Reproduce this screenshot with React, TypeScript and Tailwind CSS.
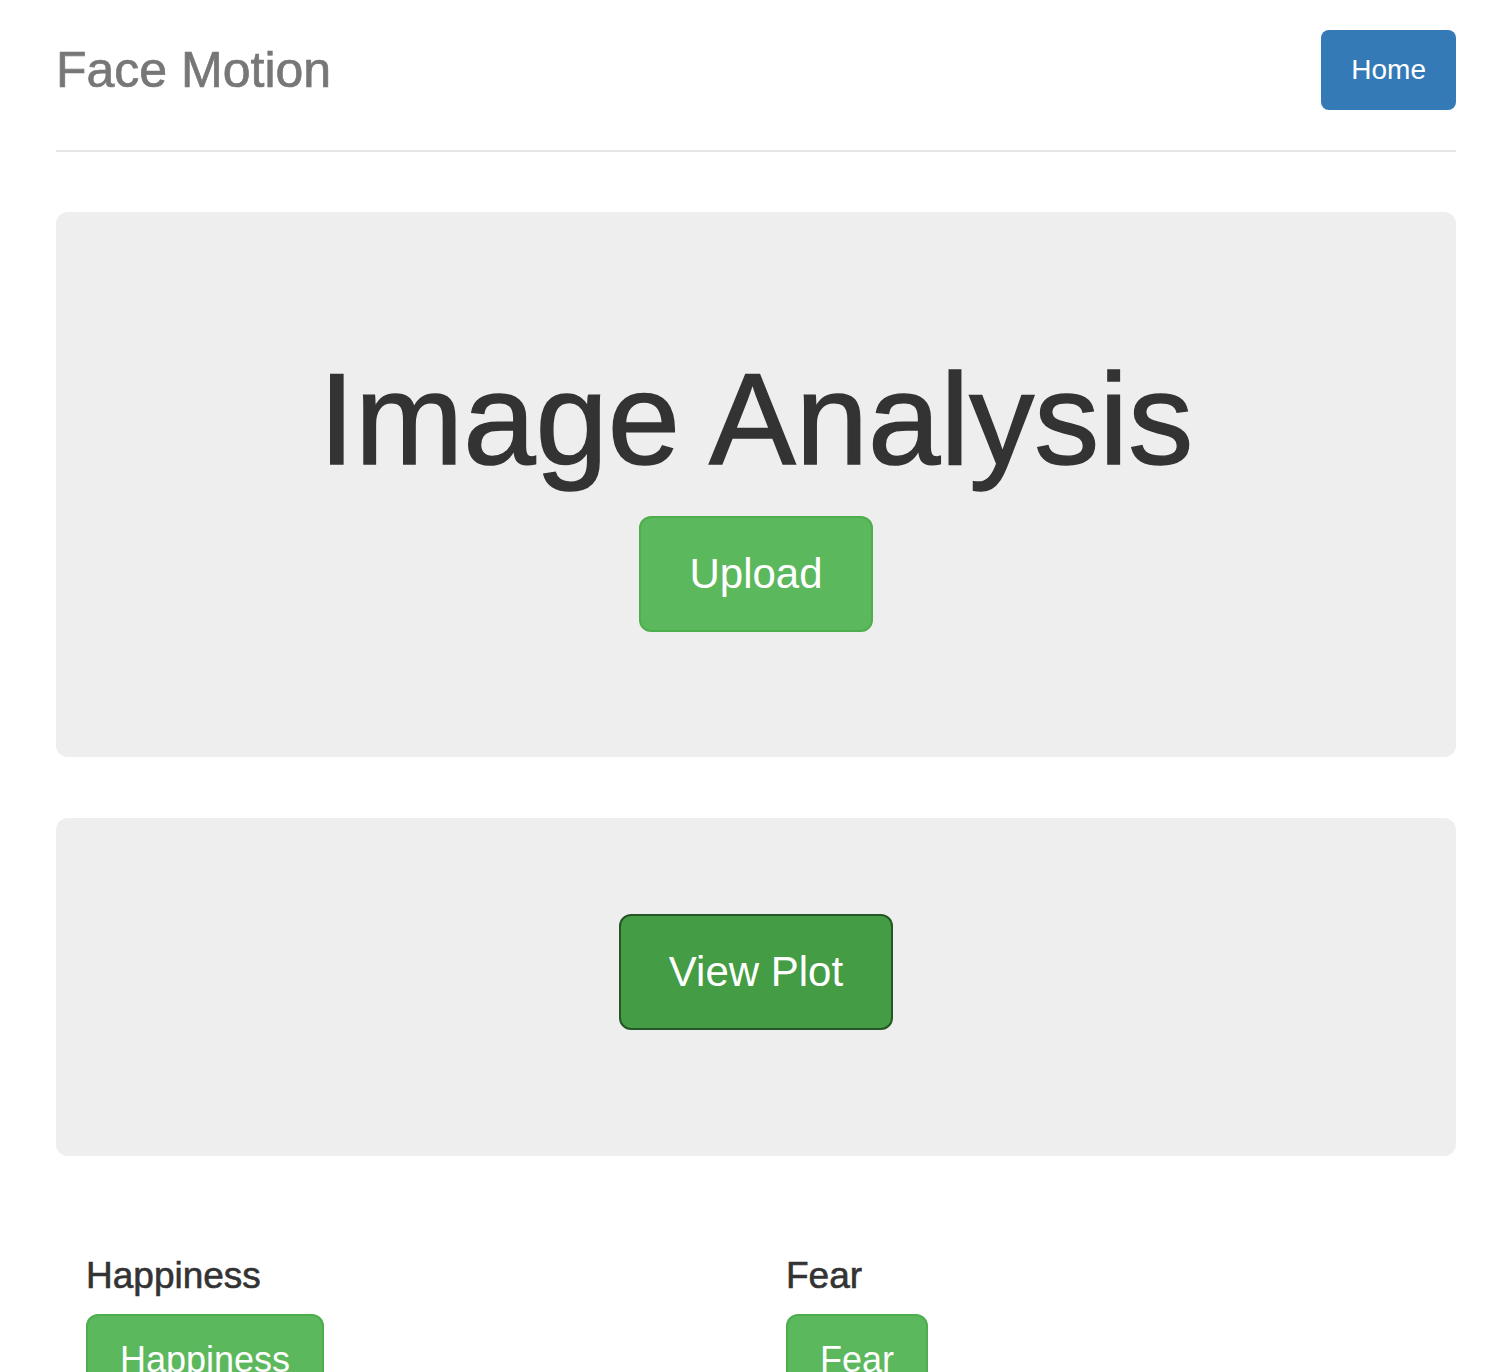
export default function App() {
  return (
    <div className="min-h-screen bg-white font-['Liberation_Sans',Arial,sans-serif] text-[#333]">
      <div className="ml-[56px] w-[1400px]">
        <header className="flex items-center justify-between border-b-2 border-[#e5e5e5] pt-[30px] pb-[40px]">
          <h3 className="text-[50px] leading-[80px] font-medium text-[#777] [-webkit-text-stroke:0.7px_#777]">
            Face Motion
          </h3>
          <a
            href="#"
            className="rounded-[8px] bg-[#337ab7] px-[30px] py-[20px] text-[28px] leading-[40px] text-white"
          >
            Home
          </a>
        </header>

        <section className="mt-[60px] rounded-[12px] bg-[#eee] pt-[136px] pb-[125px] text-center">
          <h1 className="text-[130px] leading-[142px] font-medium text-[#333] [-webkit-text-stroke:1.5px_#333]">
            Image Analysis
          </h1>
          <button className="mt-[26px] rounded-[12px] border-2 border-[#4cae4c] bg-[#5cb85c] px-[48px] py-[28px] text-[42px] leading-[56px] text-white">
            Upload
          </button>
        </section>

        <section className="mt-[61px] rounded-[12px] bg-[#eee] pt-[96px] pb-[126px] text-center">
          <button className="rounded-[12px] border-2 border-[#255625] bg-[#449d44] px-[48px] py-[28px] text-[42px] leading-[56px] text-white">
            View Plot
          </button>
        </section>

        <div className="mt-[100px] grid grid-cols-2">
          {["Happiness", "Fear"].map((name) => (
            <div key={name} className="px-[30px]">
              <h4 className="mb-[18px] text-[37px] leading-[40px] font-medium text-[#333] [-webkit-text-stroke:0.6px_#333]">
                {name}
              </h4>
              <button className="rounded-[12px] border-2 border-[#4cae4c] bg-[#5cb85c] px-[32px] py-[20px] text-[36px] leading-[48px] text-white">
                {name}
              </button>
            </div>
          ))}
        </div>
      </div>
    </div>
  );
}
